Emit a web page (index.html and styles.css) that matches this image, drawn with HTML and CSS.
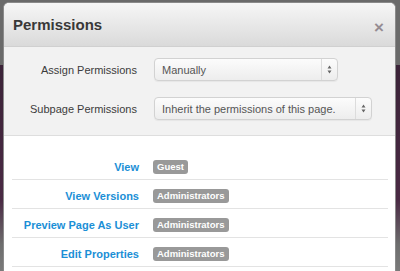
FILE: index.html
```html
<!DOCTYPE html>
<html lang="en">
<head>
<meta charset="UTF-8" />
<title>Permissions</title>
<link rel="stylesheet" href="styles.css">
</head>
<body>

<div class="dialog" role="dialog" aria-label="Permissions">
  <div class="dialog-header">
    <h3>Permissions</h3>
    <span class="close">&times;</span>
  </div>

  <div class="dialog-form">
    <div class="form-row">
      <label>Assign Permissions</label>
      <div class="select select-short">
        <span>Manually</span>
        <span class="select-arrows">
          <svg width="5" height="9" viewBox="0 0 5 9"><path d="M2.5 0.5 L4.5 3.5 L0.5 3.5 Z M2.5 8.5 L4.5 5.5 L0.5 5.5 Z" fill="#666"/></svg>
        </span>
      </div>
    </div>
    <div class="form-row">
      <label>Subpage Permissions</label>
      <div class="select select-long">
        <span>Inherit the permissions of this page.</span>
        <span class="select-arrows">
          <svg width="5" height="9" viewBox="0 0 5 9"><path d="M2.5 0.5 L4.5 3.5 L0.5 3.5 Z M2.5 8.5 L4.5 5.5 L0.5 5.5 Z" fill="#666"/></svg>
        </span>
      </div>
    </div>
  </div>

  <div class="perm-list">
    <div class="perm-row">
      <a href="#">View</a>
      <span class="badge">Guest</span>
    </div>
    <div class="perm-row">
      <a href="#">View Versions</a>
      <span class="badge">Administrators</span>
    </div>
    <div class="perm-row">
      <a href="#">Preview Page As User</a>
      <span class="badge">Administrators</span>
    </div>
    <div class="perm-row">
      <a href="#">Edit Properties</a>
      <span class="badge">Administrators</span>
    </div>
  </div>
</div>

</body>
</html>
```

FILE: styles.css
```css
body {
  margin: 0;
  height: 271px;
  overflow: hidden;
  font-family: "Liberation Sans", Arial, sans-serif;
  background: linear-gradient(to bottom, #6a6a6a 0, #6a6a6a 65px, #3b2338 65px, #4a2a44 200px, #6e6e6e 245px, #7a7a7a 100%);
}

.dialog {
  margin: 2px 0 0 3px;
  width: 393px;
  height: 269px;
  background: #fff;
  border: 1px solid #8a8a8a;
  border-bottom: none;
  border-radius: 6px 6px 0 0;
  overflow: hidden;
  box-sizing: border-box;
}

/* cabecera */
.dialog-header {
  height: 43px;
  display: flex;
  align-items: center;
  justify-content: space-between;
  padding: 0 10px 0 9px;
  background: linear-gradient(to bottom, #f6f6f6, #dadada);
  border-bottom: 1px solid #d0d0d0;
}
.dialog-header h3 {
  margin: 0 0 1px 0;
  font-size: 15px;
  font-weight: bold;
  color: #383838;
}
.close {
  font-size: 17px;
  font-weight: bold;
  color: #958c92;
  margin: 6px 0 0 0;
  padding-right: 1px;
}

/* formulario */
.dialog-form {
  background: #f2f2f2;
  border-bottom: 1px solid #dedede;
  padding: 11px 0 15px;
  display: flex;
  flex-direction: column;
  gap: 16px;
}
.form-row {
  display: grid;
  grid-template-columns: 133px auto;
  column-gap: 17px;
  align-items: center;
  justify-items: start;
}
.form-row label {
  justify-self: end;
  font-size: 11px;
  color: #3c3c3c;
}

.select {
  height: 23px;
  display: flex;
  align-items: center;
  justify-content: space-between;
  border: 1px solid #d2d2d2;
  border-radius: 4px;
  background: linear-gradient(to bottom, #fcfcfc, #ededed);
  box-shadow: 0 1px 1px rgb(0 0 0 / 0.05);
  font-size: 11px;
  color: #555;
  padding-left: 7px;
  box-sizing: border-box;
}
.select-short { width: 184px; }
.select-long { width: 218px; }
.select-arrows {
  width: 15px;
  height: 21px;
  border-left: 1px solid #dcdcdc;
  display: flex;
  align-items: center;
  justify-content: center;
}

/* lista de permisos */
.perm-list {
  padding: 15px 7px 0 8px;
}
.perm-row {
  height: 25px;
  padding-top: 3px;
  display: grid;
  grid-template-columns: 127px auto;
  column-gap: 14px;
  align-items: center;
  justify-items: start;
  border-bottom: 1px solid #e3e3e3;
}
.perm-row a {
  justify-self: end;
  font-size: 11px;
  font-weight: bold;
  color: #1b8fd6;
  text-decoration: none;
}
.badge {
  background: #999;
  color: #fff;
  font-size: 9.5px;
  font-weight: bold;
  padding: 1px 4px;
  border-radius: 3px;
  line-height: 12px;
}
```
